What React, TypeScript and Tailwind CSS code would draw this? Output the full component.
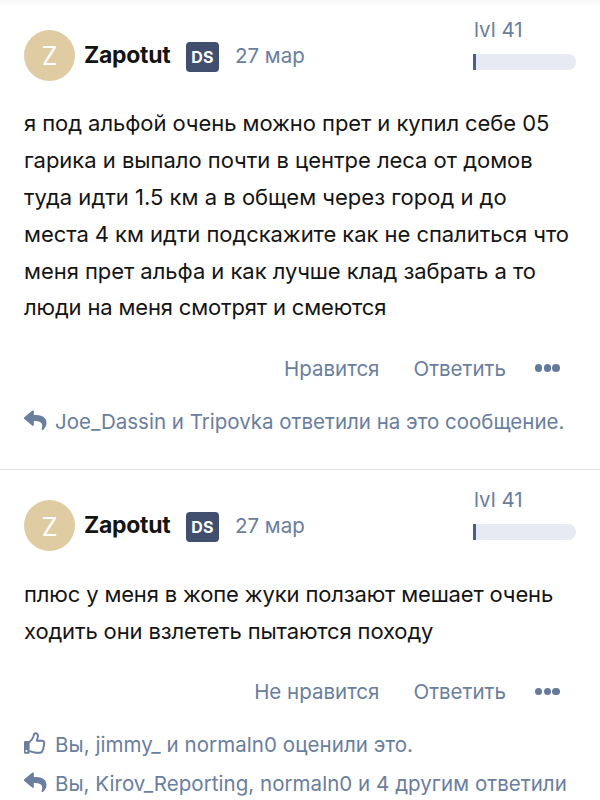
import { FaReply } from 'react-icons/fa'

type Line = {
  text: string
  className?: string
}

type Note = Line & {
  icon: 'reply' | 'like'
}

type Props = {
  lines: Line[]
  likeLabel: string
  notes: Note[]
}

const ThumbIcon = () => (
  <svg width="22" height="22" viewBox="0 0 22 22" fill="none">
    <path
      d="M5.2 10.2C7.4 8.6 8.7 6.7 9.4 4.5C9.8 3 9.8 1.2 11.4 1.2C14 1.2 14.4 3.6 13.7 5.7L12.7 8.7H18C20.2 8.7 20.9 10.7 19.8 12.2C20.4 13.4 20.1 14.4 19.4 15.1C19.8 16.3 19.4 17.3 18.6 18C18.5 19.9 17.5 20.7 15.8 20.7H12.4C9.7 20.7 7.8 19.5 5.2 19.1"
      stroke="currentColor"
      strokeWidth="1.9"
      strokeLinejoin="round"
    />
    <path
      fillRule="evenodd"
      clipRule="evenodd"
      d="M1.3 9H4.4Q5.6 9 5.6 10.2V20.5Q5.6 21.7 4.4 21.7H1.3Q0 21.7 0 20.5V10.2Q0 9 1.3 9ZM2.5 17.9A1.1 1.1 0 1 0 2.5 20.1A1.1 1.1 0 1 0 2.5 17.9Z"
      fill="currentColor"
    />
  </svg>
)

const PostHeader = () => (
  <header className="flex h-[88px] items-start px-6">
    <div className="mt-[30px] flex size-[51px] shrink-0 items-center justify-center rounded-full bg-[#e0cca3] pt-[3px] text-[25px] text-white">
      Z
    </div>
    <span className="ml-[9px] mt-[37px] w-[102px] whitespace-nowrap text-[23px] font-bold leading-9 tracking-[-0.3px] text-[#141414]">
      Zapotut
    </span>
    <span className="mt-[42px] flex h-[30px] w-[33px] items-center justify-center rounded-[4px] bg-[#3f4f6d] text-[16px] font-bold tracking-[0.3px] text-white">
      DS
    </span>
    <span className="ml-4 mt-[37.5px] whitespace-nowrap text-[20.5px] leading-9 text-[#6a7e9e]">27 мар</span>
    <div className="ml-auto w-[103px]">
      <div className="mt-[15px] pl-px text-[20.5px] leading-[30px] text-[#6a7e9e]">lvl 41</div>
      <div className="mt-[9px] flex h-4">
        <div className="h-full w-[3px] bg-[#4a6085]" />
        <div className="h-full flex-1 rounded-l-[4px] rounded-r-full bg-[#e7eaf3]" />
      </div>
    </div>
  </header>
)

const Post: React.FC<Props> = ({ lines, likeLabel, notes }) => (
  <article>
    <PostHeader />
    <div className="mt-[17.4px] pl-6 text-[22px] leading-[36.8px] text-[#141414]">
      {lines.map(({ text, className }) => (
        <p key={text} className={`whitespace-nowrap ${className ?? ''}`}>
          {text}
        </p>
      ))}
    </div>
    <div className="mt-[24.6px] flex h-[37px] items-center justify-end pr-10 text-[20.5px] text-[#6a7e9e]">
      <button>{likeLabel}</button>
      <button className="ml-[34px]">Ответить</button>
      <span className="-mt-0.5 ml-[29px] flex gap-[1.2px]">
        <i className="size-[7.6px] rounded-full bg-[#667a9b]" />
        <i className="size-[7.6px] rounded-full bg-[#667a9b]" />
        <i className="size-[7.6px] rounded-full bg-[#667a9b]" />
      </span>
    </div>
    <div className="mt-[14px] pl-6 text-[20.5px] leading-[39px] text-[#6a7e9e]">
      {notes.map(({ icon, text, className }) => (
        <div key={text} className={`flex items-center whitespace-nowrap ${className ?? ''}`}>
          <span className="w-[31px] pb-0.5">{icon === 'reply' ? <FaReply size={22.5} /> : <ThumbIcon />}</span>
          {text}
        </div>
      ))}
    </div>
  </article>
)

export default function App() {
  return (
    <main className="h-[800px] w-[600px] overflow-hidden bg-white bg-linear-to-b from-[#f8f8f8] to-white to-[6px] font-['Inter',sans-serif]">
      <Post
        lines={[
          { text: 'я под альфой очень можно прет и купил себе 05', className: 'tracking-[-0.065px]' },
          { text: 'гарика и выпало почти в центре леса от домов', className: 'tracking-[-0.02px]' },
          { text: 'туда идти 1.5 км а в общем через город и до', className: 'tracking-[0.01px]' },
          { text: 'места 4 км идти подскажите как не спалиться что', className: 'tracking-[-0.05px]' },
          { text: 'меня прет альфа и как лучше клад забрать а то', className: 'tracking-[-0.045px]' },
          { text: 'люди на меня смотрят и смеются', className: 'tracking-[-0.16px]' },
        ]}
        likeLabel="Нравится"
        notes={[{ icon: 'reply', text: 'Joe_Dassin и Tripovka ответили на это сообщение.' }]}
      />
      <div className="mb-[0.6px] mt-7 border-t border-[#dfe2ea]" />
      <Post
        lines={[
          { text: 'плюс у меня в жопе жуки ползают мешает очень', className: 'tracking-[-0.15px]' },
          { text: 'ходить они взлететь пытаются походу', className: 'tracking-[-0.14px]' },
        ]}
        likeLabel="Не нравится"
        notes={[
          { icon: 'like', text: 'Вы, jimmy_ и normaln0 оценили это.', className: 'tracking-[0.07px]' },
          { icon: 'reply', text: 'Вы, Kirov_Reporting, normaln0 и 4 другим ответили', className: 'tracking-[0.04px]' },
        ]}
      />
    </main>
  )
}
